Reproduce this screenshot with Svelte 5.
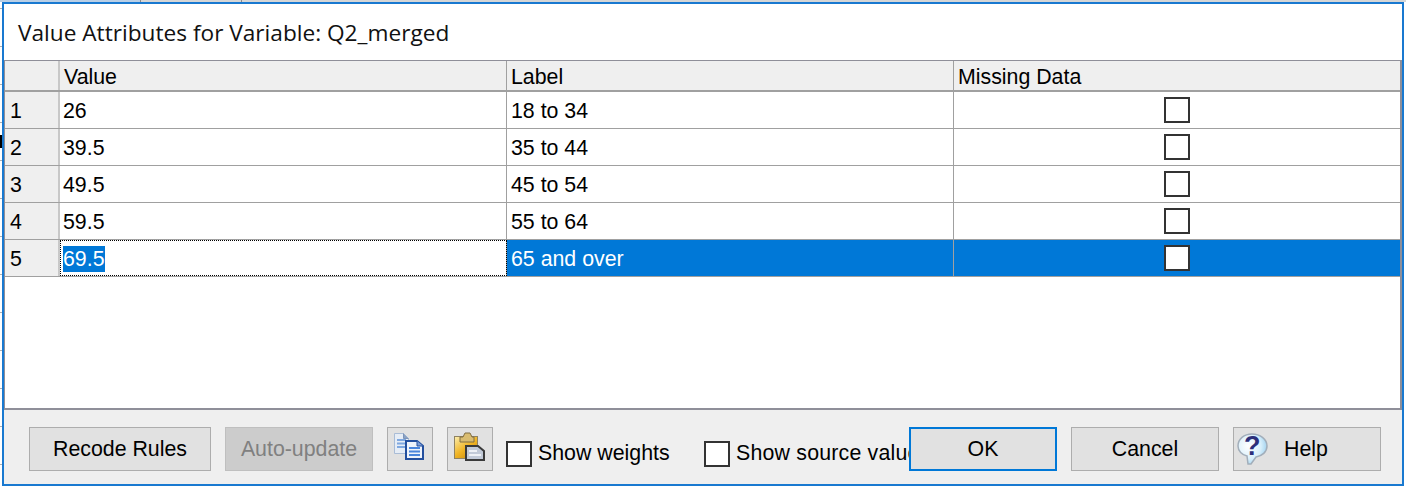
<script>
  const rows = [
    { n: 1, value: '26', label: '18 to 34' },
    { n: 2, value: '39.5', label: '35 to 44' },
    { n: 3, value: '49.5', label: '45 to 54' },
    { n: 4, value: '59.5', label: '55 to 64' },
    { n: 5, value: '69.5', label: '65 and over', selected: true }
  ];
</script>

<div class="backdrop">
  <div class="dialog">
    <div class="title">Value Attributes for Variable: Q2_merged</div>

    <div class="grid">
      <div class="row head">
        <div class="cell num"></div>
        <div class="cell">Value</div>
        <div class="cell">Label</div>
        <div class="cell last">Missing Data</div>
      </div>
      {#each rows as row}
        <div class="row" class:selected={row.selected}>
          <div class="cell num">{row.n}</div>
          {#if row.selected}
            <div class="cell value editing"><span class="sel">{row.value}</span></div>
          {:else}
            <div class="cell value">{row.value}</div>
          {/if}
          <div class="cell">{row.label}</div>
          <div class="cell last check-cell"><span class="box"></span></div>
        </div>
      {/each}
    </div>

    <div class="footer">
      <button class="btn recode">Recode Rules</button>
      <button class="btn auto">Auto-update</button>
      <button class="btn icon" aria-label="Copy">
        <svg width="44" height="42" viewBox="0 0 44 42">
          <path d="M6.5 5.5h9l5 5v15h-14z" fill="#e6edf6" stroke="#a9bcd6" />
          <path d="M15.5 5.5v5h5" fill="#8aa2c4" stroke="#7d94b8" />
          <path d="M9 12h9M9 15.5h9M9 19h9" stroke="#7fa8e0" stroke-width="2" />
          <path d="M18 13h11l6 5v13H18z" fill="#eef3fb" stroke="#234f9e" stroke-width="2" />
          <path d="M29 13v5h6" fill="#7fa0d8" stroke="#234f9e" />
          <path d="M21 20h11M21 23.5h11M21 27h11" stroke="#4a86dc" stroke-width="2" />
        </svg>
      </button>
      <button class="btn icon" aria-label="Paste">
        <svg width="44" height="42" viewBox="0 0 44 42">
          <defs>
            <linearGradient id="board" x1="0" y1="0" x2="0.8" y2="1">
              <stop offset="0" stop-color="#fbeeb0" />
              <stop offset="0.55" stop-color="#f0b424" />
              <stop offset="1" stop-color="#c88a0c" />
            </linearGradient>
          </defs>
          <rect x="6.5" y="8.5" width="23" height="22" fill="url(#board)" stroke="#8f8262" />
          <path d="M12 14v-5h3l2-4h5l2 4h2v5z" fill="#d9bc70" stroke="#7f6c42" />
          <path d="M18 18h12l6 5v9H18z" fill="#c2cad8" stroke="#3a3a3a" stroke-width="2" />
          <path d="M21 23h8M21 27h12" stroke="#eef1f6" stroke-width="2" />
        </svg>
      </button>
      <label class="opt weights"><span class="box"></span><span>Show weights</span></label>
      <label class="opt source"><span class="box"></span><span class="clip">Show source values</span></label>
      <button class="btn action ok">OK</button>
      <button class="btn action cancel">Cancel</button>
      <button class="btn action help">
        <svg width="34" height="42" viewBox="0 0 34 42">
          <defs>
            <radialGradient id="bubble" cx="0.35" cy="0.4" r="0.8">
              <stop offset="0" stop-color="#ffffff" />
              <stop offset="0.55" stop-color="#d8effb" />
              <stop offset="1" stop-color="#7fc0e8" />
            </radialGradient>
          </defs>
          <path d="M17 6C9 6 3 11 3 18c0 5 4 9 9 10l1 8h3l5-7c6-1 11-5 11-11C32 11 25 6 17 6z" fill="url(#bubble)" stroke="#a2aeba" stroke-width="1.5" />
          <text x="9" y="27" class="qmark">?</text>
        </svg>
        <span class="help-text">Help</span>
      </button>
    </div>
  </div>
</div>

<style>
  :global(body) {
    margin: 0;
    background: #ffffff;
  }

  /* the spreadsheet peeking out behind the dialog */
  .backdrop {
    width: 1406px;
    height: 487px;
    padding: 2px 2px 1px 2px;
    box-sizing: border-box;
    font-family: "Liberation Sans", Arial, sans-serif;
    color: #000;
    background:
      linear-gradient(#000, #000) 0 135px / 2px 13px no-repeat,
      linear-gradient(90deg, #b9cfe6 140px, #8a8a8a 140px, #8a8a8a 141px, #d6d6d6 141px, #d6d6d6 241px, #8a8a8a 241px, #8a8a8a 242px, #d6d6d6 242px) 0 0 / 100% 2px no-repeat,
      repeating-linear-gradient(#fff 0, #fff 8px, #b0b0b0 8px, #b0b0b0 9px, #fff 9px, #fff 38px) 0 0 / 2px 100% no-repeat,
      #fff;
  }

  .dialog {
    height: 100%;
    box-sizing: border-box;
    border: 2px solid #1979d0;
    background: #efefef;
    display: flex;
    flex-direction: column;
  }

  .title {
    height: 56px;
    background: #fff;
    box-sizing: border-box;
    padding: 15px 0 0 14px;
    font-family: "Open Sans", sans-serif;
    font-size: 22.65px;
    line-height: 28px;
    color: #111;
  }

  .grid {
    height: 350px;
    box-sizing: border-box;
    background: #fff;
    border-top: 1px solid #8f8f99;
    border-left: 1px solid #8f8f99;
    border-bottom: 2px solid #8f8f99;
    border-right: 2px solid #8f8f99;
  }

  .row {
    display: grid;
    grid-template-columns: 55px 447px 447px 1fr;
    height: 37px;
    box-sizing: border-box;
    border-bottom: 1px solid #a0a0a0;
    font-size: 21.33px;
  }

  .row.head {
    height: 31px;
    background: #efefef;
    border-bottom: 2px solid #a0a0a0;
  }

  .cell {
    border-right: 1px solid #a0a0a0;
    padding: 2px 0 0 4px;
    display: flex;
    align-items: center;
    white-space: nowrap;
    min-width: 0;
    box-sizing: border-box;
  }

  .cell.value {
    padding-left: 3px;
  }

  .row.head .cell {
    padding-top: 3px;
  }

  .cell.last {
    border-right: none;
  }

  .cell.num {
    background: #efefef;
    border-right: 2px solid #c8c8c8;
    padding-left: 5px;
  }

  .cell.check-cell {
    justify-content: center;
    padding: 0;
  }

  .selected {
    background: #0078d7;
    color: #fff;
  }

  .selected .num {
    color: #000;
  }

  .editing {
    background: #fff;
    outline: 1px dotted #000;
    outline-offset: -1px;
  }

  .sel {
    background: #0078d7;
    color: #fff;
    line-height: 26px;
  }

  .box {
    display: block;
    width: 26px;
    height: 26px;
    box-sizing: border-box;
    border: 2px solid #333;
    background: #fff;
    flex: none;
  }

  .footer {
    flex: 1;
    display: flex;
    align-items: flex-start;
    padding: 17px 0 0 25px;
    font-size: 21.33px;
  }

  .btn {
    height: 44px;
    box-sizing: border-box;
    border: 1px solid #adadad;
    background: #e1e1e1;
    font: inherit;
    color: #000;
    padding: 0;
    display: flex;
    align-items: center;
    justify-content: center;
    flex: none;
  }

  .recode { width: 182px; margin-right: 14px; }
  .auto { width: 148px; margin-right: 14px; background: #cccccc; border-color: #bfbfbf; color: #808080; }
  .icon { width: 46px; margin-right: 14px; }

  .opt {
    display: flex;
    align-items: center;
    gap: 6px;
    height: 44px;
    flex: none;
  }

  .opt .box {
    margin-top: 9px;
  }

  .opt span:last-child {
    margin-top: 9px;
  }

  .weights { width: 198px; margin-left: -1px; }
  .source { width: 205px; overflow: hidden; }

  .clip {
    white-space: nowrap;
    letter-spacing: 0.2px;
  }

  .action {
    width: 148px;
    margin-right: 14px;
  }

  .ok {
    border: 2px solid #0078d7;
  }

  .help {
    justify-content: flex-start;
  }

  .help svg {
    margin-left: 1px;
    flex: none;
  }

  .help-text {
    margin-left: 15px;
  }

  .qmark {
    font-family: "Liberation Sans", sans-serif;
    font-weight: 700;
    font-size: 27px;
    fill: #2c2f7a;
  }
</style>
